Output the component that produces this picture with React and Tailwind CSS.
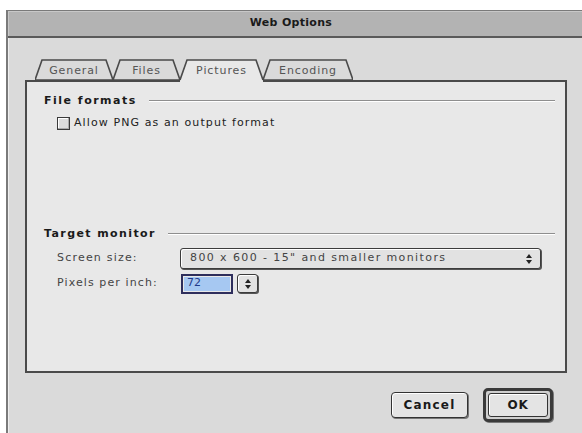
import React from "react";

const FONT = { fontFamily: '"DejaVu Sans", "Liberation Sans", sans-serif' };

function Tab({ label, width, selected }) {
  const pts = `0,21 7,1 ${width - 7},1 ${width},21`;
  return (
    <div className="relative h-[23px] shrink-0" style={{ width }}>
      <svg className="absolute left-0 top-0" width={width} height={23}>
        {selected ? (
          <>
            <polygon points={`0,23 0,21 7,1 ${width - 7},1 ${width},21 ${width},23`} fill="#e8e8e8" />
            <polyline points={`0,21 7,1 ${width - 7},1 ${width},21`} fill="none" stroke="#4a4a4a" strokeWidth="1.6" />
          </>
        ) : (
          <polygon points={pts} fill="#dadada" stroke="#4a4a4a" strokeWidth="1.6" />
        )}
      </svg>
      <span className="absolute left-0 right-0 top-[4px] text-center text-[11px] tracking-[0.9px] text-[#555]">
        {label}
      </span>
    </div>
  );
}

function Etched() {
  return (
    <div className="flex-1 flex flex-col">
      <div className="h-px bg-[#8e8e8e]" />
      <div className="h-px bg-white" />
    </div>
  );
}

export default function App() {
  return (
    <div className="w-[582px] h-[433px] bg-white pt-[10px] pl-[6px] overflow-hidden" style={FONT}>
      <div className="h-full border-l-[2px] border-t border-[#7a7a7a] bg-[#dadada] flex flex-col">
        {/* title bar */}
        <div className="h-[27px] bg-[#b3b3b3] border-b-[2px] border-[#5a5a5a] flex items-center justify-center shadow-[inset_1px_1px_0_#c8c8c8]">
          <span className="font-bold text-[11px] tracking-[0.3px] text-[#1a1a1a] -ml-[8px]">Web Options</span>
        </div>

        <div className="flex-1 border-l border-[#efefef] pl-[16px] pt-[21px]">
          {/* tabs */}
          <div className="relative z-10 flex pl-[10px] -mb-[2px]">
            <Tab label="General" width={78} />
            <Tab label="Files" width={67} />
            <Tab label="Pictures" width={83} selected />
            <Tab label="Encoding" width={90} />
          </div>

          {/* panel */}
          <div className="w-[542px] h-[293px] border-[2px] border-[#4a4a4a] bg-[#e8e8e8] pt-[12px] pl-[17px] pr-[10px]">
            <div className="flex items-center gap-[12px] h-[14px]">
              <span className="font-bold text-[11px] tracking-[1.5px] text-[#1a1a1a]">File formats</span>
              <Etched />
            </div>
            <div className="flex items-center mt-[9px] ml-[13px] h-[12px]">
              <div className="w-[13px] h-[13px] shrink-0 border border-[#3a3a3a] bg-[#dcdcdc] shadow-[inset_-1px_-1px_0_#aaa,inset_1px_1px_0_#fff]" />
              <span className="ml-[4px] text-[11px] tracking-[1.1px] text-[#222] whitespace-nowrap">Allow PNG as an output format</span>
            </div>

            <div className="flex items-center gap-[12px] h-[14px] mt-[98px]">
              <span className="font-bold text-[11px] tracking-[1.4px] text-[#1a1a1a]">Target monitor</span>
              <Etched />
            </div>

            <div className="flex items-center mt-[7px] ml-[13px] h-[21px]">
              <span className="w-[123px] shrink-0 text-[11px] tracking-[1.2px] text-[#444]">Screen size:</span>
              <div className="w-[361px] h-[21px] rounded-[3px] border border-[#3c3c3c] bg-[#e2e2e2] shadow-[1px_1px_0_#555,inset_1px_1px_0_#fff] flex items-center">
                <span className="flex-1 pl-[9px] text-[11px] tracking-[1.4px] text-[#444] whitespace-nowrap">
                  800 x 600 - 15" and smaller monitors
                </span>
                <svg width="18" height="14" className="mr-[2px]">
                  <polygon points="6,6 12,6 9,2" fill="#222" />
                  <polygon points="6,8 12,8 9,12" fill="#222" />
                </svg>
              </div>
            </div>

            <div className="flex items-center mt-[4px] ml-[13px] h-[21px]">
              <span className="w-[124px] shrink-0 text-[11px] tracking-[1.1px] text-[#444] whitespace-nowrap">Pixels per inch:</span>
              <div className="w-[52px] h-[20px] border-[2px] border-[#2e2e5c] bg-[#e8e8e8] p-[1px]">
                <div className="h-full bg-[#a6c8f2] flex items-center pl-[3px] text-[11px] text-[#1f3a8a]">72</div>
              </div>
              <div className="ml-[4px] w-[21px] h-[19px] rounded-[3px] border border-[#3c3c3c] bg-[#e2e2e2] shadow-[1px_1px_0_#555,inset_1px_1px_0_#fff] flex items-center justify-center">
                <svg width="8" height="12">
                  <polygon points="1,5 7,5 4,1" fill="#222" />
                  <polygon points="1,7 7,7 4,11" fill="#222" />
                </svg>
              </div>
            </div>
          </div>

          {/* buttons */}
          <div className="flex items-center w-[542px] justify-end mt-[15px] pr-[14px]">
            <div className="w-[77px] h-[26px] rounded-[4px] border-[1.5px] border-[#333] bg-[#e4e4e4] shadow-[1px_1px_0_#777,inset_1px_1px_0_#fff] flex items-center justify-center">
              <span className="font-bold text-[12px] tracking-[1.2px] text-[#1a1a1a]">Cancel</span>
            </div>
            <div className="ml-[15px] w-[70px] h-[34px] rounded-[5px] border-[3px] border-[#3a3a3a] bg-[#cfcfcf] p-[2px] shadow-[1px_1px_0_#777]">
              <div className="w-full h-full rounded-[3px] border border-[#333] bg-[#e4e4e4] shadow-[inset_1px_1px_0_#fff] flex items-center justify-center">
                <span className="font-bold text-[12px] tracking-[0.8px] text-[#1a1a1a]">OK</span>
              </div>
            </div>
          </div>
        </div>
      </div>
    </div>
  );
}
